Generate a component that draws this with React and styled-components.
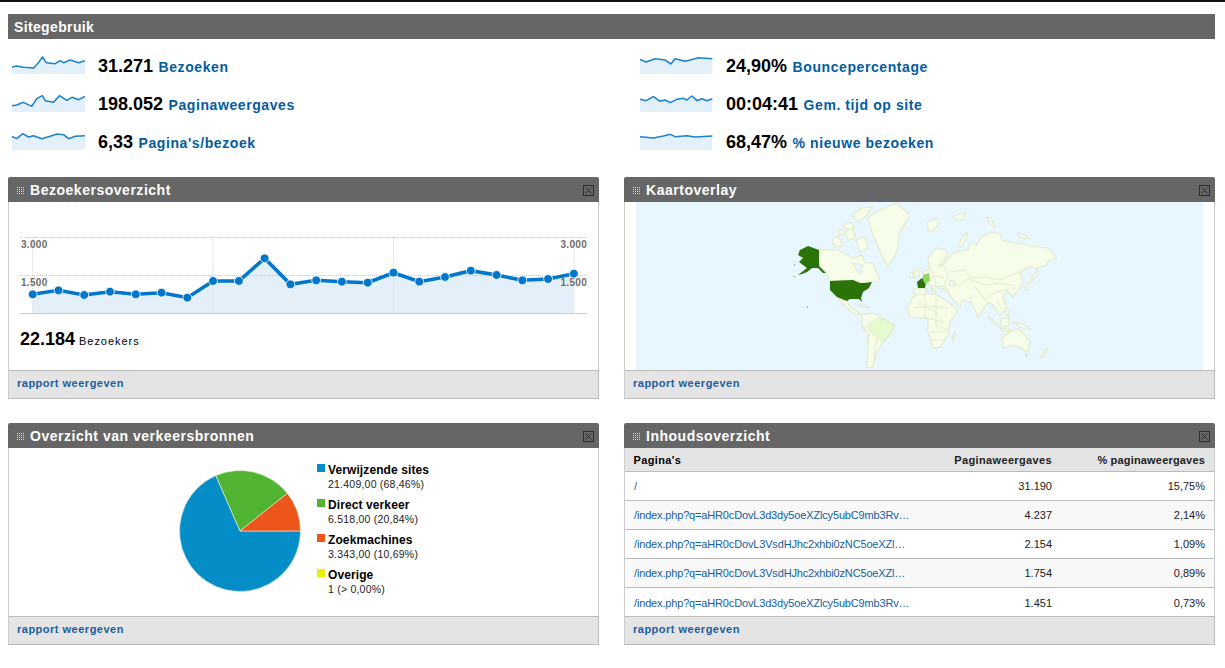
import React from "react";
import styled, { createGlobalStyle } from "styled-components";

const Global = createGlobalStyle`
  html, body { margin: 0; padding: 0; background: #fff; }
  body { font-family: "Liberation Sans", Arial, sans-serif; color: #000; }
  * { box-sizing: border-box; }
`;

const Page = styled.div`
  border-top: 2px solid #111;
  padding: 12px 10px 0 8px;
  min-height: 668px;
`;
const SectionHeader = styled.div`
  height: 25px;
  background: #666;
  color: #fff;
  font-size: 14px;
  font-weight: 700;
  letter-spacing: 0.36px;
  line-height: 27px;
  padding-left: 6px;
`;
const Metrics = styled.div`
  display: grid;
  grid-template-columns: 628px 1fr;
  grid-template-rows: repeat(3, 38px);
  grid-auto-flow: column;
  padding: 8px 0 0 4px;
  margin-bottom: 16px;
`;
const Metric = styled.div`
  display: flex;
  align-items: center;
`;
const Spark = styled.svg`
  width: 73px;
  height: 18px;
  margin-right: 13px;
  flex: none;
  position: relative;
  top: -1px;
`;
const BigNumber = styled.span`
  font-size: 18px;
  font-weight: 700;
  margin-right: 5.5px;
`;
const MetricLabel = styled.a`
  font-size: 14px;
  font-weight: 700;
  letter-spacing: 0.58px;
  color: #035c9f;
  position: relative;
  top: 1px;
`;
const Grid = styled.div`
  display: grid;
  grid-template-columns: 591px 591px;
  column-gap: 25px;
  row-gap: 24px;
`;
const Panel = styled.section`
  display: flex;
  flex-direction: column;
  height: 222px;
`;
const PanelHeader = styled.header`
  height: 25px;
  flex: none;
  background: #666;
  border-radius: 2px 2px 0 0;
  display: flex;
  align-items: center;
  padding: 0 5px 0 9px;
`;
const Grip = styled.span`
  width: 8px;
  height: 8px;
  margin: 2px 5px 0 0;
  background-color: #666;
  background-image: radial-gradient(circle at 0.5px 0.5px, #d8d8d8 0.9px, transparent 1px);
  background-size: 2px 2px;
`;
const PanelTitle = styled.h2`
  flex: 1;
  margin: 0;
  color: #fff;
  font-size: 14px;
  font-weight: 700;
  letter-spacing: 0.52px;
`;
const Close = styled.svg`
  width: 11px;
  height: 11px;
  flex: none;
  display: block;
  margin-top: 2px;
`;
const PanelBody = styled.div`
  flex: 1;
  min-height: 0;
  border-left: 1px solid #ccc;
  border-right: 1px solid #ccc;
  padding: ${p => p.$pad || "0"};
`;
const PanelFooter = styled.footer`
  height: 29px;
  flex: none;
  background: #e4e4e4;
  border: 1px solid #bbb;
  border-left-color: #ccc;
  padding-left: 8px;
  line-height: 22px;
`;
const ReportLink = styled.a`
  color: #1c5e9e;
  font-size: 11px;
  font-weight: 700;
  letter-spacing: 0.5px;
`;
const ChartSvg = styled.svg`
  display: block;
  width: 589px;
  height: 127px;
`;
const AxisLabel = styled.text`
  font-family: "Liberation Sans", Arial, sans-serif;
  font-size: 10px;
  font-weight: 700;
  letter-spacing: 0.3px;
  fill: #6e6e6e;
`;
const Total = styled.div`
  padding: 0 0 0 11px;
  display: flex;
  align-items: baseline;
`;
const TotalNumber = styled.span`
  font-size: 18px;
  font-weight: 700;
  margin-right: 4px;
`;
const TotalLabel = styled.span`
  font-size: 11px;
  letter-spacing: 0.95px;
`;
const MapSvg = styled.svg`
  display: block;
  width: 567px;
  height: 168px;
`;
const SourcesBody = styled.div`
  display: flex;
  height: 100%;
  padding: 15px 0 0 0;
`;
const Pie = styled.svg`
  width: 124px;
  height: 124px;
  margin: 6px 15px 0 169px;
  flex: none;
  display: block;
`;
const Legend = styled.ul`
  list-style: none;
  margin: 0;
  padding: 0;
`;
const LegendItem = styled.li`
  position: relative;
  height: 35px;
  padding-left: 11px;
`;
const Swatch = styled.i`
  position: absolute;
  left: 0;
  top: 1px;
  width: 8px;
  height: 8px;
  background: ${p => p.$color};
`;
const LegendName = styled.div`
  font-size: 12px;
  font-weight: 700;
  line-height: 14px;
  letter-spacing: 0.1px;
`;
const LegendValue = styled.div`
  font-size: 10.5px;
  line-height: 14px;
  letter-spacing: 0.22px;
  color: #222;
`;
const TableHead = styled.div`
  display: grid;
  grid-template-columns: minmax(0, 1fr) 140px 153px;
  height: 24px;
  background: #e4e4e4;
  border-bottom: 1px solid #bbb;
  align-items: center;
  padding: 0 9px 0 8.5px;
  font-size: 11px;
  font-weight: 700;
`;
const HeadCell = styled.div`
  text-align: ${p => (p.$right ? "right" : "left")};
  color: ${p => (p.$right ? "#222" : "#000")};
  letter-spacing: ${p => p.$spacing || "0.36px"};
  white-space: nowrap;
`;
const TableRow = styled.div`
  display: grid;
  grid-template-columns: minmax(0, 1fr) 140px 153px;
  height: 29px;
  background: ${p => (p.$alt ? "#f8f8f8" : "#fff")};
  border-bottom: 1px solid #bbb;
  align-items: center;
  padding: 0 9px;
  font-size: 11px;
  &:last-child { border-bottom: 0; }
`;
const PageLink = styled.a`
  color: #15609f;
  white-space: nowrap;
  letter-spacing: -0.16px;
`;
const NumCell = styled.div`
  text-align: right;
  color: #222;
`;

const CloseIcon = () => (
  <Close viewBox="0 0 11 11">
    <rect x="0.5" y="0.5" width="10" height="10" fill="none" stroke="#2e2e2e" />
    <path d="M2.5 2.5l6 6M8.5 2.5l-6 6" stroke="#2e2e2e" strokeWidth="1" fill="none" />
  </Close>
);

const Box = ({ title, children, pad }) => (
  <Panel>
    <PanelHeader>
      <Grip />
      <PanelTitle>{title}</PanelTitle>
      <CloseIcon />
    </PanelHeader>
    <PanelBody $pad={pad}>{children}</PanelBody>
    <PanelFooter>
      <ReportLink>rapport weergeven</ReportLink>
    </PanelFooter>
  </Panel>
);

const SparkLine = ({ pts }) => {
  const line = pts.map(p => p.join(",")).join(" ");
  const first = pts[0][0];
  const last = pts[pts.length - 1][0];
  return (
    <Spark viewBox="0 0 218 54" preserveAspectRatio="none">
      <polygon points={`${first},54 ${line} ${last},54`} fill="#e3f0fa" />
      <polyline points={line} fill="none" stroke="#1b82cf" strokeWidth="4.6" strokeLinejoin="round" />
    </Spark>
  );
};

const shift = (arr, x, y) => arr.map(([a, b]) => [a - x, b - y]);

const metrics = [
  { v: "31.271", l: "Bezoeken", p: shift([[36,203],[50,200],[70,204],[92,205],[100,207],[115,190],[127,173],[138,190],[165,193],[180,184],[190,190],[210,182],[235,190],[254,184]], 36, 170) },
  { v: "198.052", l: "Paginaweergaves", p: shift([[36,318],[50,316],[70,308],[95,320],[110,297],[127,288],[135,303],[160,308],[178,288],[200,302],[215,293],[235,300],[254,290]], 36, 283) },
  { v: "6,33", l: "Pagina's/bezoek", p: shift([[36,410],[50,417],[68,402],[85,412],[100,408],[125,417],[150,410],[170,403],[190,405],[205,417],[225,410],[254,408]], 36, 397) },
  { v: "24,90%", l: "Bouncepercentage", p: shift([[30,58],[48,66],[75,56],[105,60],[122,72],[135,56],[165,64],[205,53],[246,56]], 30, 48) },
  { v: "00:04:41", l: "Gem. tijd op site", p: shift([[30,178],[48,182],[70,170],[90,184],[105,180],[120,188],[140,178],[160,175],[170,180],[185,168],[200,182],[215,176],[230,182],[246,176]], 30, 162) },
  { v: "68,47%", l: "% nieuwe bezoeken", p: shift([[30,290],[70,294],[100,288],[120,283],[135,290],[170,287],[195,291],[246,288]], 30, 276) },
];

const ys = [283,271,285,275,283,278,293,243,243,175,253,241,245,248,218,245,231,212,225,241,237,221];
// chart svg origin is page (9, 202)
const chartPts = ys.map((y, i) => [32.7 + i * 25.77 - 9, 200 + y / 3 - 202]);

const Chart = () => {
  const line = chartPts.map(p => p.map(n => n.toFixed(1)).join(",")).join(" ");
  const base = 111;
  return (
    <ChartSvg viewBox="0 0 589 127">
      <polygon points={`${chartPts[0][0]},${base} ${line} ${chartPts[21][0]},${base}`} fill="#e3f0fa" />
      {[23.7, 204.1, 384.5, 565].map(x => (
        <line key={x} x1={x} x2={x} y1="35" y2={base} stroke="#e4e6e8" />
      ))}
      <line x1="11" x2="578" y1="35.5" y2="35.5" stroke="#ccc" strokeDasharray="1 1" />
      <line x1="11" x2="578" y1="73.5" y2="73.5" stroke="#ccc" strokeDasharray="1 1" />
      <line x1="11" x2="578" y1="111.5" y2="111.5" stroke="#ccc" />
      <AxisLabel x="12" y="46">3.000</AxisLabel>
      <AxisLabel x="12" y="84">1.500</AxisLabel>
      <AxisLabel x="578" y="46" textAnchor="end">3.000</AxisLabel>
      <AxisLabel x="578" y="84" textAnchor="end">1.500</AxisLabel>
      <polyline points={line} fill="none" stroke="#0077cc" strokeWidth="3.6" />
      {chartPts.map(([x, y], i) => (
        <circle key={i} cx={x} cy={y} r="4.4" fill="#0077cc" stroke="#fff" strokeWidth="0.8" />
      ))}
    </ChartSvg>
  );
};

const land = [
  "819,250 837,250 853,258 862,255 865,263 873,263 880,281 872,282 860,283 853,280 830,281 826,273 819,266",
  "832,240 838,236 843,245 835,247",
  "845,232 852,228 856,238 848,240",
  "856,240 865,236 868,248 860,252",
  "843,225 850,222 855,228 848,230",
  "852,215 862,208 872,207 866,216 858,222",
  "838,231 843,229 844,234 839,235",
  "868,218 878,211 887,207 897,203 910,215 900,232 897,252 888,267 883,258 873,235",
  "837,297 847,301 850,307 858,312 862,315 856,314 851,312 845,306",
  "858,305 864,305 870,308 864,307",
  "862,315 873,313 883,318 895,325 890,335 883,342 877,352 872,368 867,367 868,345 868,335 862,325",
  "907,308 913,297 920,293 930,294 937,295 948,302 958,310 950,322 948,335 940,347 933,348 928,332 928,318 920,318 910,317",
  "952,338 955,331 955,336 953,341",
  "925,283 923,272 930,268 928,258 936,248 945,250 948,254 943,262 938,267 943,265 953,253 968,250 970,243 977,245 980,238 992,232 1000,234 1002,240 1012,243 1020,244 1030,246 1048,248 1057,258 1048,261 1047,265 1037,268 1030,267 1020,272 1023,282 1018,290 1013,297 1007,290 1003,297 1007,308 1000,315 993,305 988,302 978,317 972,303 963,300 960,307 952,298 948,292 940,287 930,285",
  "913,290 918,288 927,289 925,294 915,295",
  "930,286 936,292 933,293",
  "915,269 918,268 919,276 914,278",
  "910,273 913,272 913,277 910,278",
  "1038,267 1037,275 1032,281 1029,283 1033,276",
  "1026,283 1028,283 1028,290 1025,289",
  "988,317 992,319 999,326 995,325",
  "1000,319 1009,318 1009,325 1002,327",
  "1000,328 1010,329 1012,331 1002,330",
  "1013,322 1022,324 1031,329 1024,329",
  "1005,308 1009,310 1009,317 1005,313",
  "1002,338 1010,332 1018,329 1023,333 1030,342 1028,352 1020,348 1013,345 1003,348",
  "1025,354 1027,354 1026,357",
  "1040,358 1045,350 1047,348 1046,352 1042,358",
  "953,217 960,214 965,213 962,220 956,220",
  "927,223 937,218 938,225 932,232 928,230",
  "958,247 962,238 968,232 966,238 961,247",
  "987,217 991,218 995,227 990,225",
  "1017,233 1025,235 1028,238 1020,238",
];
const borders = [
  "943,265 948,276 944,285 949,292",
  "950,272 965,270 970,278 985,277 1000,280 1012,275 1020,272",
  "960,285 968,279 985,285 1000,283 1012,285 1015,290",
  "975,287 985,300 996,292 1006,290",
  "997,300 1002,310",
  "930,268 934,275 936,285",
  "925,283 936,276 944,278",
  "913,308 930,306 948,308",
  "925,294 925,318",
  "936,295 936,325 948,330",
  "925,318 945,322",
  "930,332 948,332",
  "930,340 945,340",
  "918,302 938,314",
  "870,325 868,345",
  "877,338 874,358",
  "862,328 870,325",
  "960,285 948,285",
  "970,295 972,303",
];
const seas = [
  "853,263 863,265 861,274 856,270",
  "949,281 954,280 955,286 950,286",
  "937,287 945,286 944,289 938,289",
];

const WorldMap = () => (
  <MapSvg viewBox="636 202 567 168">
    <rect x="636" y="202" width="567" height="168" fill="#e8f6ff" />
    {land.map((p, i) => (
      <polygon key={i} points={p} fill="#f6fee9" stroke="#e4ebcd" strokeWidth="1.2" />
    ))}
    {borders.map((p, i) => (
      <polyline key={i} points={p} fill="none" stroke="#e4ebcd" strokeWidth="1" />
    ))}
    {seas.map((p, i) => (
      <polygon key={i} points={p} fill="#e8f6ff" stroke="#e4ebcd" strokeWidth="1" />
    ))}
    <polygon points="867,326 877,318 885,320 895,325 889,336 883,341 877,338" fill="#e4fbd0" stroke="#e4ebcd" />
    <polygon fill="#2b7307" points="800,250 808,246 819,250 819,266 826,273 823,273 818,268 812,268 807,272 802,274 798,275 807,268 799,262 803,258 798,255" />
    <polygon fill="#2b7307" points="830,281 853,280 860,283 865,283 872,282 869,288 863,292 861,298 862,302 859,299 850,299 847,301 837,297 830,290" />
    <polygon fill="#2b7307" points="917,282 922,278 926,282 925,288 918,288" />
    <polygon fill="#8bd956" points="923,275 929,273 930,281 925,284 923,280" />
    <g fill="#9cc38a">
      <rect x="793" y="276" width="2" height="1" />
      <rect x="794" y="264" width="1" height="2" />
      <rect x="807" y="306" width="1" height="2" />
    </g>
  </MapSvg>
);

const polar = deg => {
  const a = (deg * Math.PI) / 180;
  return [62 + 60.5 * Math.cos(a), 62 + 60.5 * Math.sin(a)];
};
const slice = (from, to, color) => {
  const [x1, y1] = polar(from);
  const [x2, y2] = polar(to);
  const large = to - from > 180 ? 1 : 0;
  return (
    <path
      d={`M62 62L${x1} ${y1}A60.5 60.5 0 ${large} 1 ${x2} ${y2}Z`}
      fill={color}
      stroke="#e8f0e0"
      strokeWidth="0.6"
    />
  );
};

const sources = [
  ["#058dc7", "Verwijzende sites", "21.409,00 (68,46%)"],
  ["#50b432", "Direct verkeer", "6.518,00 (20,84%)"],
  ["#ed561b", "Zoekmachines", "3.343,00 (10,69%)"],
  ["#edef00", "Overige", "1 (> 0,00%)"],
];

const A = "/index.php?q=aHR0cDovL3d3dy5oeXZlcy5ubC9mb3Rv…";
const B = "/index.php?q=aHR0cDovL3VsdHJhc2xhbi0zNC5oeXZl…";
const rows = [
  ["/", "31.190", "15,75%"],
  [A, "4.237", "2,14%"],
  [B, "2.154", "1,09%"],
  [B, "1.754", "0,89%"],
  [A, "1.451", "0,73%"],
];

export default function App() {
  return (
    <Page>
      <Global />
      <SectionHeader>Sitegebruik</SectionHeader>
      <Metrics>
        {metrics.map(m => (
          <Metric key={m.l}>
            <SparkLine pts={m.p} />
            <BigNumber>{m.v}</BigNumber>
            <MetricLabel>{m.l}</MetricLabel>
          </Metric>
        ))}
      </Metrics>
      <Grid>
        <Box title="Bezoekersoverzicht">
          <Chart />
          <Total>
            <TotalNumber>22.184</TotalNumber>
            <TotalLabel>Bezoekers</TotalLabel>
          </Total>
        </Box>
        <Box title="Kaartoverlay" pad="0 11px">
          <WorldMap />
        </Box>
        <Box title="Overzicht van verkeersbronnen">
          <SourcesBody>
            <Pie viewBox="0 0 124 124">
              {slice(0, 246.46, "#058dc7")}
              {slice(246.46, 321.5, "#50b432")}
              {slice(321.5, 359.98, "#ed561b")}
            </Pie>
            <Legend>
              {sources.map(([c, n, v]) => (
                <LegendItem key={n}>
                  <Swatch $color={c} />
                  <LegendName>{n}</LegendName>
                  <LegendValue>{v}</LegendValue>
                </LegendItem>
              ))}
            </Legend>
          </SourcesBody>
        </Box>
        <Box title="Inhoudsoverzicht">
          <TableHead>
            <HeadCell>Pagina's</HeadCell>
            <HeadCell $right>Paginaweergaves</HeadCell>
            <HeadCell $right $spacing="0.18px">% paginaweergaves</HeadCell>
          </TableHead>
          {rows.map((r, i) => (
            <TableRow key={i} $alt={i % 2 === 1}>
              <PageLink>{r[0]}</PageLink>
              <NumCell>{r[1]}</NumCell>
              <NumCell>{r[2]}</NumCell>
            </TableRow>
          ))}
        </Box>
      </Grid>
    </Page>
  );
}
